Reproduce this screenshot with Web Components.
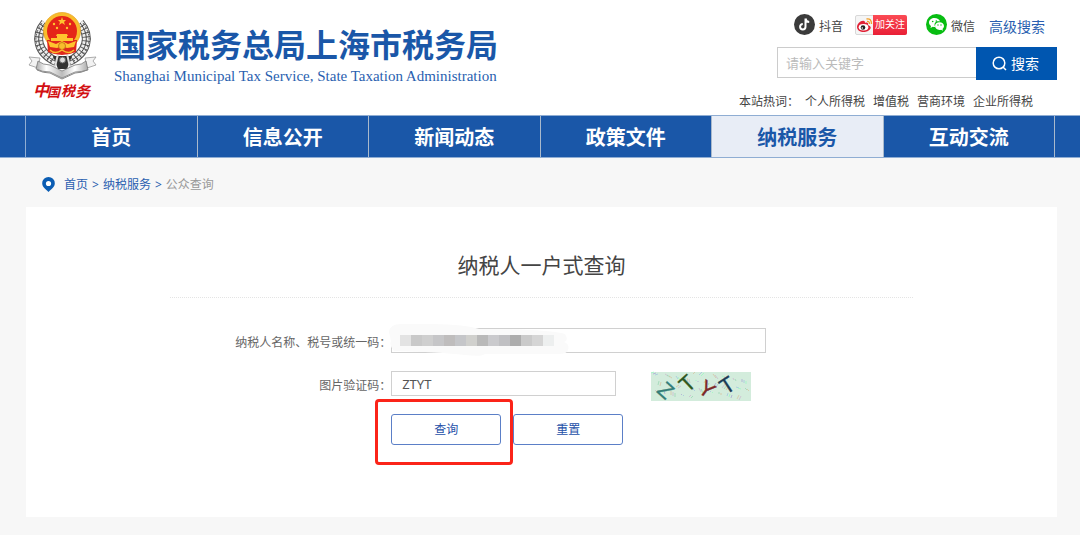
<!DOCTYPE html>
<html lang="zh-CN">
<head>
<meta charset="utf-8">
<meta name="viewport" content="width=device-width, initial-scale=1">
<title>纳税人一户式查询</title>
<style>
  :root {
    --brand: #1a57a8;
    --brand-strong: #0056b0;
    --link: #2a5fb0;
    --text: #444;
    --gutter-left: 26px;
    --gutter-right: 23px;
  }
  body {
    margin: 0;
    min-height: 100vh;
    background: #f7f7f7;
    color: var(--text);
    font: 12px/20px "Noto Sans", "Noto Sans CJK SC", sans-serif;
  }
</style>
</head>
<body>
<site-header>
  <brand-logo slot="brand">
    国家税务总局上海市税务局
    <span slot="english">Shanghai Municipal Tax Service, State Taxation Administration</span>
  </brand-logo>
  <social-links slot="social"></social-links>
  <search-box slot="search" placeholder="请输入关键字"></search-box>
  <hot-words slot="hot" words="个人所得税,增值税,营商环境,企业所得税"></hot-words>
</site-header>

<site-nav>
  <nav-item>首页</nav-item>
  <nav-item>信息公开</nav-item>
  <nav-item>新闻动态</nav-item>
  <nav-item>政策文件</nav-item>
  <nav-item active>纳税服务</nav-item>
  <nav-item>互动交流</nav-item>
</site-nav>

<bread-crumb path="首页,纳税服务,公众查询"></bread-crumb>

<query-card>
  <span slot="title">纳税人一户式查询</span>
  <query-form></query-form>
</query-card>

<script>
  // attaches an open shadow root filled from a template
  function render(host, html) {
    const template = document.createElement("template");
    template.innerHTML = `
      <style>
        *, *::before, *::after { box-sizing: border-box; }
        a { color: inherit; text-decoration: none; }
        svg { display: block; flex: none; }
      </style>
      ${html}`;
    host.attachShadow({ mode: "open" }).appendChild(template.content.cloneNode(true));
  }

  customElements.define(
    "site-header",
    class extends HTMLElement {
      constructor() {
        super();
        render(this, `
          <style>
            :host { display: block; background: #fff; }
            header {
              display: flex;
              justify-content: space-between;
              align-items: flex-start;
              padding: 10px var(--gutter-right) 3px 28px;
            }
            .tools { display: flex; flex-direction: column; width: 280px; }
          </style>
          <header>
            <slot name="brand"></slot>
            <div class="tools">
              <slot name="social"></slot>
              <slot name="search"></slot>
              <slot name="hot"></slot>
            </div>
          </header>`);
      }
    }
  );

  customElements.define(
    "brand-logo",
    class extends HTMLElement {
      constructor() {
        super();
        render(this, `
          <style>
            :host { display: block; color: var(--brand); }
            a { display: flex; gap: 17px; }
            .names { padding-top: 14px; white-space: nowrap; }
            .name { font-size: 32px; line-height: 42px; font-weight: 700; }
            .english { font: 15px/20px "Liberation Serif", serif; color: var(--link); }
          </style>
          <a href="#">
            <tax-emblem></tax-emblem>
            <div class="names">
              <div class="name"><slot></slot></div>
              <div class="english"><slot name="english"></slot></div>
            </div>
          </a>`);
      }
    }
  );

  customElements.define(
    "tax-emblem",
    class extends HTMLElement {
      constructor() {
        super();
        render(this, `
          <style>:host { display: block; }</style>
          <svg width="69" height="92" viewBox="0 0 69 92" role="img" aria-label="中国税务">
            <defs>
              <linearGradient id="ribbon" x1="0" x2="1">
                <stop offset="0" stop-color="#aaa"/><stop offset=".2" stop-color="#fff"/>
                <stop offset=".5" stop-color="#bbb"/><stop offset=".75" stop-color="#fff"/>
                <stop offset="1" stop-color="#aaa"/>
              </linearGradient>
            </defs>
            <!-- wheat ears -->
            <g fill="none">
              <path d="M17 13C6 26 9 43 29 52M52 13c11 13 8 30-12 39" stroke="#555" stroke-width="9"/>
              <path d="M17 13C6 26 9 43 29 52M52 13c11 13 8 30-12 39" stroke="#eee" stroke-width="7" stroke-dasharray="3 1"/>
              <path d="M17 13C6 26 9 43 29 52M52 13c11 13 8 30-12 39" stroke="#444" stroke-width="1"/>
              <path d="M14 13C3 28 7 42 25 52M55 13c11 15 7 29-11 39" stroke="#666" stroke-width="1" stroke-dasharray="2 2"/>
            </g>
            <path d="M25 46h19l-5 13h-9z" fill="#333"/>
            <path d="M30 44l-3 13M39 44l3 13" stroke="#ddd" stroke-width="2"/>
            <circle cx="34.500" cy="50" r="3" fill="#ddd" stroke="#666"/>
            <!-- ribbon -->
            <path d="M1 47l11 1-2 10-9-3 3-4zM68 47l-11 1 2 10 9-3-3-4z" fill="#f2f2f2" stroke="#999" stroke-width=".8"/>
            <path d="M10 51q5 4 12 4l12 6 13-6q7 0 11-4l2 9q-7 2-13 2l-13 6-12-6q-8 0-14-3z" fill="url(#ribbon)" stroke="#777" stroke-width=".8"/>
            <path d="M9 60q6 3 13 3l12 6 13-6q6 0 12-3" fill="none" stroke="#888"/>
            <!-- national emblem -->
            <circle cx="34" cy="21" r="18.500" fill="#f8bd2c"/>
            <circle cx="34" cy="21" r="18.500" fill="none" stroke="#e7a11c" stroke-width=".7"/>
            <circle cx="34" cy="21" r="15" fill="#e52618"/>
            <path d="M19 30h30l-1 12q-14 6-28 0z" fill="#df281d"/>
            <g fill="#ffc52e">
              <path d="M34 7l1 3h3l-2 2 1 3-3-2-3 2 1-3-2-2h3z"/>
              <circle cx="26" cy="14" r="1.200"/><circle cx="42" cy="14" r="1.200"/>
              <circle cx="29" cy="18" r="1.200"/><circle cx="39" cy="18" r="1.200"/>
              <path d="M29 24h10l1 2h-1v2h6v3H23v-3h6v-2h-1z"/>
              <path d="M20 31l8 3 6-3 6 3 8-3-2 6-7 1-5-2-5 2-7-1z"/>
            </g>
            <circle cx="34" cy="36" r="3.500" fill="#f8bd2c" stroke="#b85a10" stroke-width=".7"/>
            <path d="M22 40q5 5 12 0 7 5 12 0" fill="none" stroke="#f8bd2c" stroke-width="1.500"/>
            <g fill="#d20f12" font-family="Noto Sans CJK SC, sans-serif" font-weight="700" font-style="italic">
              <text x="5" y="86" font-size="16">中</text>
              <text x="19" y="87" font-size="13">国</text>
              <text x="33" y="86" font-size="14">税</text>
              <text x="47" y="87" font-size="15">务</text>
            </g>
          </svg>`);
      }
    }
  );

  customElements.define(
    "social-links",
    class extends HTMLElement {
      constructor() {
        super();
        render(this, `
          <style>
            :host {
              display: flex;
              align-items: center;
              justify-content: flex-end;
              height: 30px;
              padding-right: 12px;
              white-space: nowrap;
            }
            a { display: flex; align-items: center; gap: 4px; padding-top: 4px; }
            a svg { margin-top: -6px; }
            .weibo { margin: 0 19px 0 12px; padding: 0; }
            .weibo span {
              display: flex;
              height: 20px;
              border: 1px solid #d8d8d8;
              border-radius: 2px;
              background: #f5f5f5;
            }
            .weibo svg { margin: 0; }
            .weibo b {
              margin: -1px;
              padding: 0 2px;
              border-radius: 0 2px 2px 0;
              background: linear-gradient(#fb4b55, #e91f36);
              color: #fff;
              font-size: 10px;
              font-weight: 400;
              line-height: 19px;
            }
            .advanced { margin-left: 14px; color: var(--link); font-size: 14px; }
          </style>
          <a href="#">
            <svg width="21" height="21" viewBox="0 0 21 21">
              <circle cx="10.500" cy="10.500" r="10.500" fill="#3b3b3b"/>
              <path d="M11.500 4.500v8.200a2.700 2.700 0 1 1-2.700-2.700M11.500 4.500q.5 3.300 3.700 3.500" fill="none" stroke="#fff" stroke-width="2"/>
            </svg>
            抖音
          </a>
          <a class="weibo" href="#"><span>
            <svg width="18" height="18" viewBox="0 0 18 18">
              <path d="M1 11c0-3 4-7 7-6 1 0 1 1 1 2 2-1 4 0 3 2 6 2 1 7-4 7-4 0-7-2-7-5z" fill="#e02135"/>
              <ellipse cx="7.500" cy="11.300" rx="4.800" ry="3.200" fill="#fff"/>
              <circle cx="7" cy="11.500" r="2.300" fill="#222"/><circle cx="6.300" cy="12" r=".8" fill="#fff"/>
              <path d="M10.500 3q5-1 5 5M11 5.500q2.500-.5 2.500 2.500" fill="none" stroke="#f4a12a" stroke-width="1.300"/>
            </svg>
            <b>加关注</b>
          </span></a>
          <a href="#">
            <svg width="21" height="21" viewBox="0 0 21 21">
              <circle cx="10.500" cy="10.500" r="10.500" fill="#08bd12"/>
              <path d="M8.500 4C5.500 4 3 6 3 8.500c0 1.400.8 2.600 2 3.400L4.500 14l2.300-1.200q1.200.3 2.400.2C7 8.500 11 6.500 14 7.500 13.500 5.500 11.200 4 8.500 4z" fill="#fff"/>
              <path d="M13.500 8.300c-2.500 0-4.500 1.700-4.500 3.800S11 16 13.500 16q.9 0 1.600-.3l1.900 1-.5-1.800c1-.7 1.500-1.700 1.500-2.800 0-2.100-2-3.800-4.500-3.800z" fill="#fff"/>
              <g fill="#08bd12"><circle cx="6.700" cy="7.500" r=".8"/><circle cx="10.300" cy="7" r=".8"/><circle cx="12" cy="11" r=".7"/><circle cx="15" cy="11" r=".7"/></g>
            </svg>
            微信
          </a>
          <a class="advanced" href="#">高级搜索</a>`);
      }
    }
  );

  customElements.define(
    "search-box",
    class extends HTMLElement {
      constructor() {
        super();
        render(this, `
          <style>
            :host { display: block; padding-top: 7px; }
            form { display: flex; align-items: flex-start; }
            input {
              flex: 1;
              min-width: 0;
              height: 31px;
              padding: 0 8px;
              border: 1px solid #ccc;
              border-right: 0;
              outline: 0;
              font: inherit;
              font-size: 13px;
            }
            input::placeholder { color: #bbb; }
            button {
              display: flex;
              align-items: center;
              justify-content: center;
              gap: 4px;
              width: 81px;
              height: 33px;
              padding: 0 2px 0 0;
              border: 0;
              background: var(--brand-strong);
              color: #fff;
              font: inherit;
              font-size: 14px;
            }
          </style>
          <form>
            <input type="text" aria-label="关键字" placeholder="${this.getAttribute("placeholder")}">
            <button type="button">
              <svg width="15" height="15" viewBox="0 0 15 15" fill="none" stroke="#fff" stroke-width="1.500">
                <circle cx="7" cy="7" r="5.800"/><path d="M11 11l3 3"/>
              </svg>
              搜索
            </button>
          </form>`);
      }
    }
  );

  customElements.define(
    "hot-words",
    class extends HTMLElement {
      constructor() {
        super();
        const words = this.getAttribute("words").split(",");
        render(this, `
          <style>
            :host {
              display: flex;
              justify-content: flex-end;
              gap: 8px;
              padding: 12px 24px 0 0;
              white-space: nowrap;
            }
            span { margin-right: -2px; }
          </style>
          <span>本站热词：</span>
          ${words.map((word) => `<a href="#">${word}</a>`).join("")}`);
      }
    }
  );

  customElements.define(
    "site-nav",
    class extends HTMLElement {
      constructor() {
        super();
        render(this, `
          <style>
            :host { display: block; background: var(--brand); }
            nav {
              display: flex;
              height: 43px;
              padding: 0 25px;
              border: 1px solid #8fadd3;
              border-width: 1px 0;
            }
            nav::before { content: ""; border-left: 1px solid #8fadd3; }
          </style>
          <nav><slot></slot></nav>`);
      }
    }
  );

  customElements.define(
    "nav-item",
    class extends HTMLElement {
      constructor() {
        super();
        render(this, `
          <style>
            :host {
              flex: 1;
              border-right: 1px solid #a9b9cc;
              color: #fff;
              font-size: 20px;
              font-weight: 700;
            }
            :host([active]) { background: #e8edf6; color: var(--brand); }
            a { display: block; height: 41px; line-height: 44px; text-align: center; }
          </style>
          <a href="#"><slot></slot></a>`);
      }
    }
  );

  customElements.define(
    "bread-crumb",
    class extends HTMLElement {
      constructor() {
        super();
        const path = this.getAttribute("path").split(",");
        const current = path.pop();
        render(this, `
          <style>
            :host { display: block; }
            nav {
              display: flex;
              align-items: center;
              gap: 4px;
              height: 49px;
              padding: 4px 42px 0;
              color: var(--link);
            }
            svg { margin-right: 5px; }
            .current { color: #999; }
          </style>
          <nav>
            <svg width="13" height="15" viewBox="0 0 13 15">
              <path d="M6.500 0a6.300 6.300 0 0 1 6.300 6.300c0 3.500-3 5.500-6.300 8.700C3.200 11.800.2 9.800.2 6.300A6.300 6.300 0 0 1 6.500 0z" fill="#0b5db3"/>
              <circle cx="6.500" cy="6.500" r="2.600" fill="#fff"/>
            </svg>
            ${path.map((name) => `<a href="#">${name}</a><span>&gt;</span>`).join("")}
            <span class="current">${current}</span>
          </nav>`);
      }
    }
  );

  customElements.define(
    "query-card",
    class extends HTMLElement {
      constructor() {
        super();
        render(this, `
          <style>
            :host {
              display: block;
              margin: 0 var(--gutter-right) 18px var(--gutter-left);
              padding: 42px 0 72px;
              background: #fff;
            }
            h1 {
              margin: 0 14%;
              padding-bottom: 16px;
              border-bottom: 1px dotted #e4e4e4;
              font-size: 21px;
              font-weight: 400;
              line-height: 32px;
              text-align: center;
            }
          </style>
          <h1><slot name="title"></slot></h1>
          <slot></slot>`);
      }
    }
  );

  customElements.define(
    "query-form",
    class extends HTMLElement {
      constructor() {
        super();
        render(this, `
          <style>
            :host { display: block; padding-top: 30px; color: #666; }
            form {
              display: grid;
              grid-template-columns: 6fr 11fr;
              row-gap: 18px;
              padding-left: 2px;
            }
            label { padding-top: 5px; text-align: right; white-space: nowrap; }
            .field { display: flex; position: relative; height: 25px; }
            input {
              height: 25px;
              padding: 0 10px;
              border: 1px solid #d0d0d0;
              outline: 0;
              color: #555;
              font: inherit;
              font-size: 13px;
            }
            #payer { width: 375px; }
            #code { width: 225px; margin-right: 35px; }
            .mask { position: absolute; left: -2px; top: -4px; }
            .actions {
              grid-column: 2;
              display: flex;
              gap: 12px;
              position: relative;
              width: fit-content;
            }
            button {
              width: 110px;
              height: 31px;
              border: 1px solid #5b7fc7;
              border-radius: 3px;
              background: #fff;
              color: #2450a8;
              font: inherit;
            }
            .marker {
              position: absolute;
              left: -16px;
              top: -15px;
              width: 138px;
              height: 66px;
              border: 3px solid #fb2419;
              border-radius: 4px;
              pointer-events: none;
            }
          </style>
          <form>
            <label for="payer">纳税人名称、税号或统一码：</label>
            <div class="field">
              <input id="payer" type="text">
              <pixel-mask class="mask"></pixel-mask>
            </div>
            <label for="code">图片验证码：</label>
            <div class="field">
              <input id="code" type="text" value="ZTYT">
              <captcha-image></captcha-image>
            </div>
            <div class="actions">
              <button type="button">查询</button>
              <button type="reset">重置</button>
              <span class="marker"></span>
            </div>
          </form>`);
      }
    }
  );

  // covers the taxpayer's name
  customElements.define(
    "pixel-mask",
    class extends HTMLElement {
      constructor() {
        super();
        const greys = ["#e3e3e3", "#c9c9c9", "#cfcfcf", "#c6c6c8", "#bfbdbd", "#c5c6c9", "#d0d0cd",
          "#b9b9b9", "#cacacd", "#c0c0c3", "#adadad", "#cacaca", "#d5d5d5", "#edefef"];
        render(this, `
          <style>:host { display: block; }</style>
          <svg width="181" height="33" viewBox="0 0 181 33">
            <path d="M0 8Q1 0 12 0q60-1 78 5 70 0 86 5 4 7-1 8 6 2 4 8-1 4-9 4H96q-3 3-20 1Q50 28 5 27q-5-5-3-10z" fill="#fafafa"/>
            ${greys.map((grey, i) => `<rect x="${11 + i * 11}" y="11" width="11" height="11" fill="${grey}"/>`).join("")}
          </svg>`);
      }
    }
  );

  customElements.define(
    "captcha-image",
    class extends HTMLElement {
      constructor() {
        super();
        const colors = ["#8fb", "#c9a8c8", "#8fb8e0", "#d9b58c", "#9c8fd0", "#86cfa4"];
        let noise = "";
        for (let i = 0; i < 70; i++) {
          const x = 3 + ((i * 37) % 94);
          const y = (i * 23 + (i >> 2)) % 25;
          noise += `<path d="M${x} ${y}l${(i % 7) - 3} ${(i % 4) + 1}" stroke="${colors[i % 6]}"/>`;
        }
        render(this, `
          <style>
            :host { display: block; padding-top: 1px; }
            svg { overflow: visible; }
          </style>
          <svg width="100" height="29" viewBox="0 0 100 29" role="img" aria-label="验证码">
            <rect width="100" height="29" fill="#d3ecdc"/>
            <g stroke-width=".8" opacity=".7">${noise}</g>
            <g font-family="Liberation Sans, sans-serif" font-size="22" text-anchor="middle" stroke-width=".3">
              <text transform="translate(15 18) rotate(42)" y="8" fill="#347d78" stroke="#347d78">Z</text>
              <text transform="translate(36 11) rotate(-43)" y="8" fill="#2d5620" stroke="#2d5620">T</text>
              <text transform="translate(56 17) rotate(35)" y="8" fill="#7d2929" stroke="#7d2929">Y</text>
              <text transform="translate(76 13) rotate(-33)" y="8" fill="#1c3c55" stroke="#1c3c55">T</text>
            </g>
          </svg>`);
      }
    }
  );
</script>
</body>
</html>
